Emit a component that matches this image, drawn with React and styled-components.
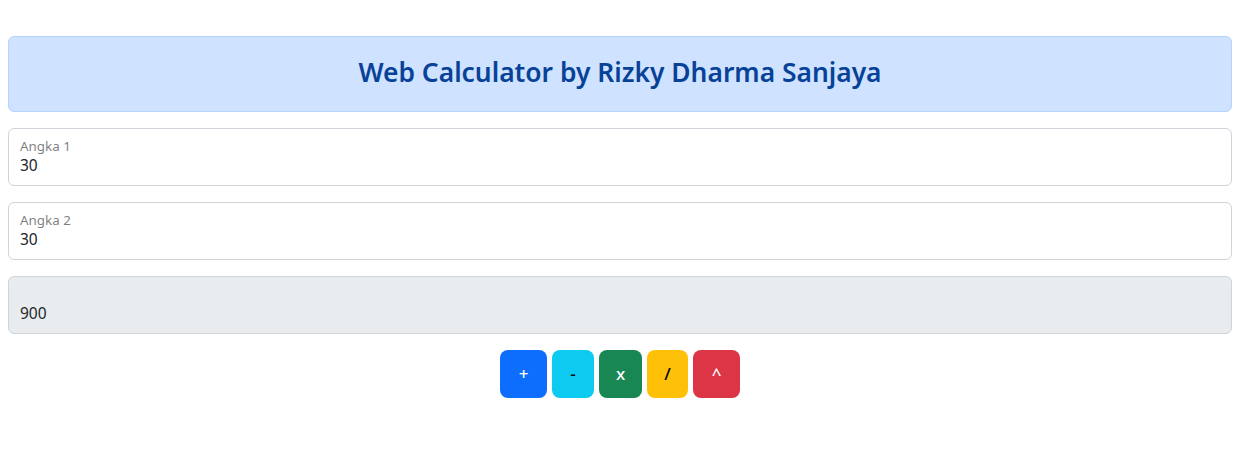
import React, { useState } from "react";
import styled, { createGlobalStyle } from "styled-components";

const GlobalStyle = createGlobalStyle`
  body {
    margin: 0;
    background: #fff;
    font-family: "Noto Sans", "Open Sans", sans-serif;
    color: #212529;
  }
`;

const Page = styled.div`
  padding: 36px 8px 0;
  display: flex;
  flex-direction: column;
`;

const Banner = styled.div`
  background: #cfe2ff;
  border: 1px solid #b6d4fe;
  border-radius: 6px;
  padding: 18px 16px 22px;
  margin-bottom: 16px;
  text-align: center;
`;

const Title = styled.h3`
  margin: 0;
  font-size: 26.4px;
  font-weight: 560;
  line-height: 34px;
  color: #084298;
`;

const Field = styled.div`
  position: relative;
  margin-bottom: 16px;
`;

const Input = styled.input`
  box-sizing: border-box;
  display: block;
  width: 100%;
  height: 58px;
  padding: 26px 11px 10px;
  font: inherit;
  font-size: 15.5px;
  line-height: 1.25;
  color: #212529;
  background: ${({ readOnly }) => (readOnly ? "#e9ecef" : "#fff")};
  border: 1px solid #ced4da;
  border-radius: 6px;
  outline: none;
`;

const Label = styled.label`
  position: absolute;
  top: 10px;
  left: 12px;
  font-size: 13.4px;
  line-height: 1.2;
  color: rgba(33, 37, 41, 0.6);
  pointer-events: none;
`;

const ButtonRow = styled.div`
  display: flex;
  justify-content: center;
  gap: 5px;
`;

const OpButton = styled.button`
  font: inherit;
  font-size: 17px;
  font-weight: 500;
  line-height: 24px;
  padding: 12px 0;
  width: ${({ $w }) => $w}px;
  border: none;
  border-radius: 8px;
  background: ${({ $bg }) => $bg};
  color: ${({ $fg }) => $fg};
  cursor: pointer;
`;

const ops = [
  { sym: "+", w: 47, bg: "#0d6efd", fg: "#fff", fn: (a, b) => a + b },
  { sym: "-", w: 42, bg: "#0dcaf0", fg: "#000", fn: (a, b) => a - b },
  { sym: "x", w: 43, bg: "#198754", fg: "#fff", fn: (a, b) => a * b },
  { sym: "/", w: 41, bg: "#ffc107", fg: "#000", fn: (a, b) => a / b },
  { sym: "^", w: 47, bg: "#dc3545", fg: "#fff", fn: (a, b) => Math.pow(a, b) },
];

export default function App() {
  const [a, setA] = useState("30");
  const [b, setB] = useState("30");
  const [result, setResult] = useState("900");

  return (
    <Page>
      <GlobalStyle />
      <Banner>
        <Title>Web Calculator by Rizky Dharma Sanjaya</Title>
      </Banner>
      <Field>
        <Input id="a1" value={a} onChange={(e) => setA(e.target.value)} />
        <Label htmlFor="a1">Angka 1</Label>
      </Field>
      <Field>
        <Input id="a2" value={b} onChange={(e) => setB(e.target.value)} />
        <Label htmlFor="a2">Angka 2</Label>
      </Field>
      <Field>
        <Input readOnly value={result} />
      </Field>
      <ButtonRow>
        {ops.map((op) => (
          <OpButton
            key={op.sym}
            $w={op.w}
            $bg={op.bg}
            $fg={op.fg}
            onClick={() => setResult(String(op.fn(Number(a), Number(b))))}
          >
            {op.sym}
          </OpButton>
        ))}
      </ButtonRow>
    </Page>
  );
}
